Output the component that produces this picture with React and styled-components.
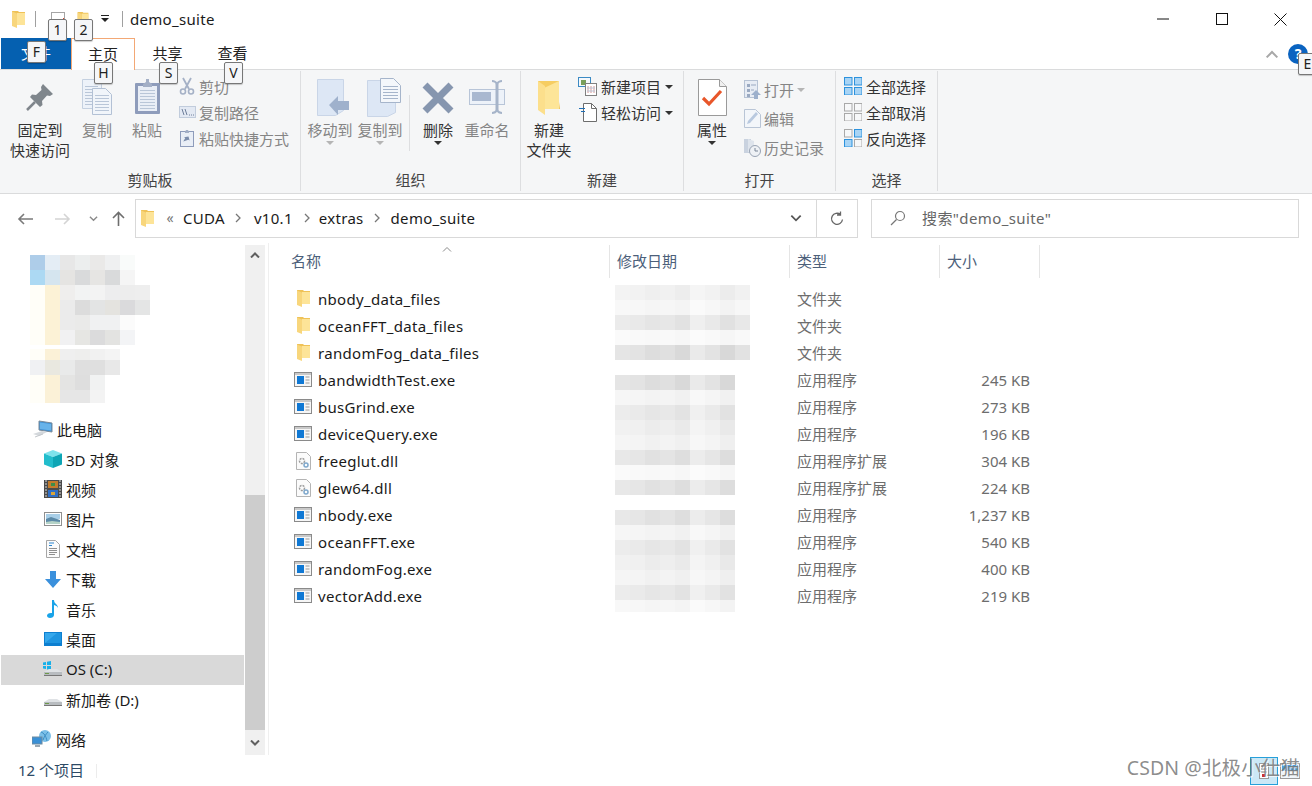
import styled, { createGlobalStyle } from 'styled-components'

const GlobalStyle = createGlobalStyle`
  html, body { margin: 0; padding: 0; background: #fff; }
  body { font-family: "Noto Sans", "Noto Sans CJK SC", sans-serif; font-size: 15px; color: #1a1a1a; }
`

const Window = styled.div`
  position: relative;
  width: 1312px;
  height: 786px;
  overflow: hidden;
  background: #fff;
  display: flex;
  flex-direction: column;
`

const Svg = styled.svg`
  display: block;
  flex-shrink: 0;
`

/* ---------- icons ---------- */

const SmallFolder = ({ w = 13, h = 17 }) => (
  <Svg width={w} height={h} viewBox="0 0 13 17">
    <path d="M0 0h6l1 1h6v13H0z" fill="#efc258" />
    <path d="M5 2h8v12H5z" fill="#fde498" />
    <path d="M0 .5l5 2V17l-5-2z" fill="#f8d67c" />
  </Svg>
)

const BigFolder = () => (
  <Svg width="24" height="36" viewBox="0 0 24 36">
    <path d="M1 1h21v28H1z" fill="#f6cd62" />
    <path d="M7 8l15-7v28H7z" fill="#fde598" />
    <path d="M1 1l7 5v29l-7-5z" fill="#fcdf8c" />
    <path d="M8 29h15v-7l-1 7z" fill="#f1c452" />
  </Svg>
)

const DocLines = ({ x, y, w, n, gap = 3, c = '#b9c6d8' }) => (
  <>
    {Array.from({ length: n }).map((_, i) => (
      <path key={i} d={`M${x} ${y + i * gap + 0.5}h${w}`} stroke={c} />
    ))}
  </>
)

const PinIcon = () => (
  <Svg width="28" height="28" viewBox="0 0 28 28">
    <path d="M17 1l10 10-3 2-3-.5-5 5.500 .5 4-2.500 2L4 14l2-2.500 4 .5 5.500-5L15 4z" fill="#7f868c" />
    <path d="M9 19L1 27" stroke="#7f868c" strokeWidth="2.500" />
  </Svg>
)

const CopyIcon = () => (
  <Svg width="30" height="36" viewBox="0 0 30 36">
    <path d="M.5.500h14l5 5v24H.5z" fill="#edf2f9" stroke="#c4d0e0" />
    <DocLines x={3} y={7} w={13} n={7} />
    <path d="M10.500 9.500h13l6 6v20h-19z" fill="#f1f5fa" stroke="#b3c1d5" />
    <DocLines x={13} y={16} w={14} n={6} />
  </Svg>
)

const PasteIcon = () => (
  <Svg width="27" height="37" viewBox="0 0 27 37">
    <rect x="1" y="5" width="25" height="31" rx="1" fill="#8e9cbb" />
    <rect x="4" y="8" width="19" height="25" fill="#e9eef6" />
    <DocLines x={6} y={12} w={15} n={7} />
    <path d="M9 6l3-2V1h3v3l3 2v3H9z" fill="#a3afc6" />
  </Svg>
)

const ScissorsIcon = () => (
  <Svg width="16" height="18" viewBox="0 0 16 18" fill="none" stroke="#a5b1c6">
    <path d="M4 1l6 11M12 1L6 12" strokeWidth="1.800" />
    <circle cx="4" cy="14.500" r="2.500" strokeWidth="1.600" />
    <circle cx="12" cy="14.500" r="2.500" strokeWidth="1.600" />
  </Svg>
)

const PathIcon = () => (
  <Svg width="17" height="12" viewBox="0 0 17 12">
    <rect x=".5" y=".5" width="16" height="11" fill="#e3e9f3" stroke="#c1ccdc" />
    <path d="M3 3l2 6M6 3l2 6" stroke="#6f7f9b" />
    <path d="M10 9h1M12 9h1M14 9h1" stroke="#6f7f9b" />
  </Svg>
)

const ShortcutIcon = () => (
  <Svg width="14" height="18" viewBox="0 0 14 18">
    <rect x=".5" y="2.500" width="13" height="15" fill="#e9eef6" stroke="#8e9cbb" />
    <path d="M5 3l1-2h2l1 2v1H5z" fill="#a3afc6" />
    <path d="M5 14V10h-1.500L7 7l3 3H8.500" fill="#7a8cab" transform="rotate(30 7 10)" />
  </Svg>
)

const MoveToIcon = () => (
  <Svg width="33" height="37" viewBox="0 0 33 37">
    <path d="M.5.500h26v31l-8 5H.5z" fill="#dde7f5" stroke="#c9d5e7" />
    <path d="M12 26l9-9v5h11v9H21v5z" fill="#9fb1cc" />
  </Svg>
)

const CopyToIcon = () => (
  <Svg width="34" height="39" viewBox="0 0 34 39">
    <path d="M.5 2.500h28v32l-8 4H.5z" fill="#dde7f5" stroke="#c9d5e7" />
    <path d="M13.500.500h13l7 7v17h-20z" fill="#f4f7fb" stroke="#a6b5cb" />
    <DocLines x={16} y={8} w={15} n={5} c="#a6b5cb" />
  </Svg>
)

const DeleteIcon = () => (
  <Svg width="32" height="32" viewBox="0 0 32 32">
    <path d="M3 3l26 26M29 3L3 29" stroke="#8696af" strokeWidth="7" />
  </Svg>
)

const RenameIcon = () => (
  <Svg width="36" height="34" viewBox="0 0 36 34">
    <rect x=".5" y="9.500" width="35" height="15" fill="#edf2f9" stroke="#b8c5d8" />
    <rect x="3" y="12" width="19" height="9" fill="#a9b8d0" />
    <path d="M28 4v26" stroke="#a6b4c9" strokeWidth="3" />
    <path d="M23 1c2 0 4 1 5 3 1-2 3-3 5-3M23 33c2 0 4-1 5-3 1 2 3 3 5 3" stroke="#a6b4c9" strokeWidth="2" fill="none" />
  </Svg>
)

const NewItemIcon = () => (
  <Svg width="19" height="19" viewBox="0 0 19 19">
    <rect x=".5" y=".5" width="12" height="9" fill="#f5f8fb" stroke="#3b8ac4" />
    <rect x="3" y="3" width="5" height="5" fill="#7ba05b" />
    <rect x="7.500" y="6.500" width="11" height="12" fill="#fff" stroke="#808080" />
    <path d="M10 9v7M13 9v7M16 9v7" stroke="#d99694" />
    <path d="M9 11h8M9 14h8" stroke="#b8c6d8" />
  </Svg>
)

const EasyAccessIcon = () => (
  <Svg width="18" height="19" viewBox="0 0 18 19">
    <path d="M4.500.500h8l5 5v13h-13z" fill="#fff" stroke="#6d6d6d" />
    <path d="M12.500.500v5h5" fill="none" stroke="#6d6d6d" />
    <path d="M0 5.500h6M2 8.500h4" stroke="#1f6fb5" strokeWidth="1.200" />
  </Svg>
)

const PropertiesIcon = () => (
  <Svg width="29" height="37" viewBox="0 0 29 37">
    <path d="M.5.500h21l7 7v29H.5z" fill="#fff" stroke="#9a9a9a" />
    <path d="M21.500.500v7h7" fill="#f0f0f0" stroke="#9a9a9a" />
    <path d="M5 19l6 6 12-13" fill="none" stroke="#e8562a" strokeWidth="3.200" />
  </Svg>
)

const OpenSmallIcon = () => (
  <Svg width="17" height="19" viewBox="0 0 17 19">
    <rect x=".5" y=".5" width="13" height="17" fill="#e7ecf4" stroke="#b6c2d4" />
    <path d="M3 4h3v3H3zM3 9h3v3H3zM3 14h3v3H3z" fill="#9aa9c1" />
    <path d="M7 5h5M7 10h3" stroke="#9aa9c1" />
    <path d="M7 15l5-5 5 5h-3v4h-4v-4z" fill="#9db0cc" />
  </Svg>
)

const EditIcon = () => (
  <Svg width="17" height="19" viewBox="0 0 17 19">
    <path d="M.5.500h11l5 5v13H.5z" fill="#f3f6fa" stroke="#b9c5d6" />
    <path d="M3 15l1-3 8-9 2 2-8 9z" fill="#b9c9df" />
  </Svg>
)

const HistoryIcon = () => (
  <Svg width="17" height="19" viewBox="0 0 17 19">
    <path d="M0 1h7v14H0z" fill="#c9d2df" />
    <path d="M4 1l6 2v11H4z" fill="#dee4ec" />
    <circle cx="11" cy="13" r="5.500" fill="#eef1f5" stroke="#98a3b3" />
    <path d="M11 10v3h3" fill="none" stroke="#7b8798" />
  </Svg>
)

const GridIcon = ({ on }) => (
  <Svg width="18" height="18" viewBox="0 0 18 18">
    {[[0, 0], [10, 0], [0, 10], [10, 10]].map(([x, y], i) => (
      <rect
        key={i}
        x={x + 0.5}
        y={y + 0.5}
        width="7.500"
        height="7.500"
        fill={on[i] ? '#a8d4f5' : '#f7f8f9'}
        stroke={on[i] ? '#2c92dd' : '#a9a9a9'}
      />
    ))}
  </Svg>
)

const ExeIcon = () => (
  <Svg width="18" height="15" viewBox="0 0 18 15">
    <rect x=".5" y=".5" width="17" height="14" fill="#f6f6f6" stroke="#8a8a8a" />
    <path d="M1 1h16v2H1z" fill="#c9c9c9" />
    <rect x="3" y="4" width="7" height="8" fill="#0f78d4" />
    <path d="M11.500 5h4M11.500 8h4M11.500 11h4" stroke="#9a9a9a" />
  </Svg>
)

const DllIcon = () => (
  <Svg width="15" height="18" viewBox="0 0 15 18">
    <path d="M.5.500h10l4 4v13H.5z" fill="#fbfbfb" stroke="#b4b4b4" />
    <circle cx="6" cy="9" r="2.500" fill="none" stroke="#9c9c9c" strokeWidth="1.500" strokeDasharray="2 1" />
    <circle cx="10" cy="13" r="2" fill="none" stroke="#7fa8cc" strokeWidth="1.500" />
  </Svg>
)

const ComputerIcon = () => (
  <Svg width="20" height="18" viewBox="0 0 20 18">
    <path d="M6 1l13 2v9L6 10z" fill="#3d8fd4" stroke="#7b8b99" />
    <path d="M7 2.500l11 1.500v6.500L7 9z" fill="#67b3ea" />
    <path d="M0 14l9-3 5 1-8 4z" fill="#d4d8dc" />
    <path d="M2 17l8-3" stroke="#c3c7cb" />
  </Svg>
)

const CubeIcon = () => (
  <Svg width="18" height="18" viewBox="0 0 18 18">
    <path d="M9 0l9 3.500L9 7 0 3.500z" fill="#7ee3ec" />
    <path d="M0 3.500L9 7v11l-9-3.500z" fill="#22bdcc" />
    <path d="M18 3.500L9 7v11l9-3.500z" fill="#0ea5b5" />
  </Svg>
)

const FilmIcon = () => (
  <Svg width="18" height="18" viewBox="0 0 18 18">
    <rect width="18" height="18" fill="#4a4a4a" />
    {[1, 4, 7, 10, 13, 16].map(y => (
      <path key={y} d={`M1 ${y}h2M15 ${y}h2`} stroke="#d9d9d9" />
    ))}
    <rect x="4" y="1" width="10" height="7" fill="#c27b2c" />
    <rect x="4" y="10" width="10" height="7" fill="#2f6fc6" />
    <rect x="7" y="3" width="4" height="3" fill="#3c8d4a" />
    <rect x="7" y="12" width="4" height="3" fill="#d9a53a" />
  </Svg>
)

const PictureIcon = () => (
  <Svg width="18" height="14" viewBox="0 0 18 14">
    <rect x=".5" y=".5" width="17" height="13" fill="#fff" stroke="#8f8f8f" />
    <path d="M2 2h14v5H2z" fill="#a9cfe8" />
    <path d="M2 7l5-2 9 3v4H2z" fill="#5c8aa8" />
    <path d="M2 10l6-1 8 1v2H2z" fill="#b6d4c8" />
  </Svg>
)

const DocumentIcon = () => (
  <Svg width="14" height="18" viewBox="0 0 14 18">
    <path d="M.5.500h9l4 4v13H.5z" fill="#fbfbfb" stroke="#a6a6a6" />
    <path d="M3 3h5M3 5.500h3" stroke="#2a86d1" strokeWidth="1.200" />
    <path d="M3 8.500h8M3 10.500h8M3 12.500h8M3 14.500h6" stroke="#8f8f8f" />
  </Svg>
)

const DownloadIcon = () => (
  <Svg width="16" height="17" viewBox="0 0 16 17">
    <path d="M5 0h6v8h5l-8 9-8-9h5z" fill="#3a90dc" />
  </Svg>
)

const MusicIcon = () => (
  <Svg width="12" height="18" viewBox="0 0 12 18">
    <path d="M5 0h2c0 4 4 4 4 8-1-2-2-2.500-4-3v10c0 2-2 3-4 3s-3-1-3-2.500S2 12.500 5 13z" fill="#19a3e8" />
  </Svg>
)

const DesktopIcon = () => (
  <Svg width="18" height="14" viewBox="0 0 18 14">
    <rect width="18" height="14" fill="#0d7fd0" />
    <path d="M1 1h16v10H1z" fill="#35a8ec" />
    <path d="M1 11l12-10h4v10z" fill="#1f95e0" />
  </Svg>
)

const DriveIcon = ({ win }) => (
  <Svg width="20" height="16" viewBox="0 0 20 16">
    {win && <path d="M0 1.500l3-.5v3H0zM4 .8L8 0v4H4zM0 5h3v3l-3-.5zM4 5h4v4l-4-.6z" fill="#17b0ea" />}
    <path d="M1 11l5-3h8l5 3v3H1z" fill="#dfe2e5" />
    <path d="M1 11h18v3.500H1z" fill="#b8bcc0" />
    <path d="M2 12h4v1H2z" fill="#6d9a4a" />
    <path d="M1 14.500h18" stroke="#777" />
  </Svg>
)

const NetworkIcon = () => (
  <Svg width="20" height="18" viewBox="0 0 20 18">
    <circle cx="13" cy="6" r="6" fill="#7cc0e8" />
    <path d="M9 2c3 1 5 4 6 9M16 2c-2 2-4 5-5 8" stroke="#3c8ec4" fill="none" />
    <rect x="0" y="7" width="10" height="7" fill="#3a90d6" stroke="#6f8ba0" />
    <path d="M3 16h5" stroke="#9ba8b2" strokeWidth="2" />
  </Svg>
)

const Chevron = ({ up, w = 10, h = 6, c = '#7a7a7a', sw = 1.500 }) => (
  <Svg width={w} height={h} viewBox="0 0 10 6">
    <path d={up ? 'M1 5.500l4-4 4 4' : 'M1 .5l4 4 4-4'} fill="none" stroke={c} strokeWidth={sw} />
  </Svg>
)

const BackArrow = () => (
  <Svg width="16" height="12" viewBox="0 0 16 12">
    <path d="M16 6H2M7 1L2 6l5 5" fill="none" stroke="#7a7a7a" strokeWidth="1.600" />
  </Svg>
)

const ForwardArrow = () => (
  <Svg width="16" height="12" viewBox="0 0 16 12">
    <path d="M0 6h14M9 1l5 5-5 5" fill="none" stroke="#d4d4d4" strokeWidth="1.600" />
  </Svg>
)

const CrumbArrow = () => (
  <Svg width="6" height="10" viewBox="0 0 6 10">
    <path d="M1 1l4 4-4 4" fill="none" stroke="#777" strokeWidth="1.300" />
  </Svg>
)

/* ---------- title bar ---------- */

const TitleBar = styled.div`
  display: flex;
  align-items: center;
  height: 38px;
  padding-left: 12px;
  flex-shrink: 0;
`

const TitleSep = styled.div`
  width: 1px;
  height: 16px;
  background: #a0a0a0;
  margin: 0 ${p => p.$right ?? 15}px 0 ${p => p.$left ?? 10}px;
`

const TitleText = styled.div`
  font-size: 15px;
  color: #1a1a1a;
  letter-spacing: 0.3px;
`

const QuickDoc = styled.div`
  width: 14px;
  height: 14px;
  margin-right: 12px;
  border: 1px solid #a5a5a5;
  background: linear-gradient(135deg, #fff 70%, #d9452a 70%);
  box-sizing: border-box;
`

const QuickDrop = styled.div`
  margin: 0 0 0 12px;
  width: 8px;
  height: 7px;
  border-top: 1px solid #222;
  position: relative;
  &:after {
    content: '';
    position: absolute;
    left: 0;
    top: 2px;
    border: 4px solid transparent;
    border-top-color: #222;
    border-bottom: 0;
  }
`

const WindowButtons = styled.div`
  margin-left: auto;
  margin-right: 2px;
  display: flex;
`

const WindowButton = styled.div`
  width: 59px;
  height: 38px;
  display: flex;
  align-items: center;
  justify-content: center;
`

/* ---------- tabs ---------- */

const TabBar = styled.div`
  display: flex;
  align-items: stretch;
  height: 32px;
  padding-left: 1px;
  border-bottom: 1px solid #dadbdc;
  box-sizing: border-box;
  flex-shrink: 0;
`

const Tab = styled.div`
  width: ${p => p.$w || 65}px;
  display: flex;
  align-items: center;
  justify-content: center;
  padding-bottom: 2px;
  font-size: 15px;
  box-sizing: border-box;
  color: ${p => (p.$file ? '#fff' : '#222')};
  background: ${p => (p.$file ? '#0560b0' : '#fff')};
  border: ${p => (p.$active ? '1px solid #f3a875' : 'none')};
  border-bottom: none;
  height: ${p => (p.$active ? '32px' : 'auto')};
`

const TabRight = styled.div`
  margin-left: auto;
  display: flex;
  align-items: center;
  gap: 9px;
  padding-right: 4px;
`

const HelpBall = styled.div`
  width: 20px;
  height: 20px;
  border-radius: 50%;
  background: #0a63c0;
  color: #fff;
  font-weight: 700;
  font-size: 14px;
  line-height: 20px;
  text-align: center;
`

const KeyTip = styled.div`
  position: absolute;
  left: ${p => p.$x}px;
  top: ${p => p.$y}px;
  width: 19px;
  height: 22px;
  box-sizing: border-box;
  border: 1px solid #777;
  border-radius: 2px;
  background: #f5f6f8;
  box-shadow: 0 1px 1px rgba(0, 0, 0, 0.2);
  color: #222;
  font-size: 14px;
  line-height: 20px;
  text-align: center;
`

/* ---------- ribbon ---------- */

const Ribbon = styled.div`
  display: flex;
  height: 124px;
  background: #f5f6f7;
  border-bottom: 1px solid #dadbdc;
  box-sizing: border-box;
  flex-shrink: 0;
`

const Group = styled.div`
  width: ${p => p.$w}px;
  height: 120px;
  margin-top: 1px;
  box-sizing: border-box;
  border-right: 1px solid #dddee0;
  display: flex;
  flex-direction: column;
`

const GroupBody = styled.div`
  flex: 1;
  display: flex;
  align-items: flex-start;
  padding-left: ${p => p.$pl || 0}px;
`

const GroupLabel = styled.div`
  height: 20px;
  margin-bottom: 1px;
  line-height: 20px;
  text-align: center;
  font-size: 15px;
  color: #444;
`

const BigButton = styled.div`
  width: ${p => p.$w}px;
  padding-top: 7px;
  display: flex;
  flex-direction: column;
  align-items: center;
  flex-shrink: 0;
  color: ${p => (p.$off ? '#858585' : '#333')};
  font-size: 15px;
  line-height: 20px;
`

const BigIcon = styled.div`
  height: 42px;
  box-sizing: border-box;
  padding-top: ${p => p.$pt || 0}px;
  margin-left: ${p => p.$ml || 0}px;
  display: flex;
  align-items: flex-start;
  justify-content: center;
`

const Caret = styled.div`
  width: 0;
  height: 0;
  margin-top: 1px;
  border: 4px solid transparent;
  border-top-color: ${p => (p.$off ? '#b5b5b5' : '#333')};
  border-bottom: 0;
`

const SmallList = styled.div`
  display: flex;
  flex-direction: column;
  padding-top: ${p => p.$pt || 3}px;
  margin-left: ${p => p.$ml || 0}px;
`

const SmallItem = styled.div`
  height: ${p => p.$h || 26}px;
  display: flex;
  align-items: center;
  gap: ${p => p.$gap || 4}px;
  font-size: 15px;
  color: ${p => (p.$off ? '#858585' : '#333')};
  white-space: nowrap;
`

const SmallIconBox = styled.div`
  width: ${p => p.$w || 18}px;
  display: flex;
  justify-content: center;
`

const VDivider = styled.div`
  width: 1px;
  height: 56px;
  margin: 24px 5px 0 4px;
  background: #dddee0;
`

/* ---------- address row ---------- */

const AddressRow = styled.div`
  height: 49px;
  display: flex;
  align-items: flex-start;
  padding: 5px 0 0 17px;
  box-sizing: border-box;
  flex-shrink: 0;
`

const NavButtons = styled.div`
  display: flex;
  align-items: center;
  width: 118px;
  height: 39px;
`

const NavGap = styled.div`
  width: ${p => p.$w}px;
`

const AddressBox = styled.div`
  width: 723px;
  height: 39px;
  box-sizing: border-box;
  border: 1px solid #d9d9d9;
  display: flex;
  align-items: center;
  padding-left: 5px;
`

const Crumb = styled.span`
  font-size: 15px;
  padding-bottom: 2px;
  color: #1a1a1a;
  letter-spacing: 0.3px;
`

const CrumbSep = styled.div`
  width: 14px;
  margin: 0 ${p => p.$mr || 0}px 0 ${p => p.$ml || 0}px;
  display: flex;
  justify-content: center;
  flex-shrink: 0;
  color: #777;
  font-size: 14px;
  padding-bottom: 2px;
`

const AddressEnd = styled.div`
  margin-left: auto;
  display: flex;
  align-items: center;
  height: 100%;
`

const DropBox = styled.div`
  width: 41px;
  height: 100%;
  display: flex;
  align-items: center;
  justify-content: center;
  border-right: 1px solid #d9d9d9;
`

const RefreshBox = styled.div`
  width: 40px;
  display: flex;
  justify-content: center;
`

const SearchBox = styled.div`
  width: 428px;
  height: 39px;
  margin-left: 13px;
  box-sizing: border-box;
  border: 1px solid #d9d9d9;
  display: flex;
  align-items: center;
  gap: 16px;
  padding: 0 0 2px 18px;
  color: #666;
  font-size: 15px;
  letter-spacing: 0.4px;
`

/* ---------- main ---------- */

const Main = styled.div`
  height: 512px;
  display: flex;
  flex-shrink: 0;
`

const NavPane = styled.div`
  width: 245px;
  padding-top: 12px;
  box-sizing: border-box;
  flex-shrink: 0;
`

const MosaicRow = styled.div`
  display: flex;
  margin-left: ${p => p.$ml || 0}px;
`

const MosaicCell = styled.div.attrs(p => ({ style: { background: p.$c } }))`
  width: 15px;
  height: ${p => p.$h || 15}px;
  flex-shrink: 0;
`

const NavMosaic = styled.div`
  height: 160px;
`

const MosaicGap = styled.div`
  height: ${p => p.$h}px;
`

const TreeRow = styled.div`
  height: 30px;
  box-sizing: border-box;
  display: flex;
  align-items: center;
  margin: 0 1px;
  background: ${p => (p.$selected ? '#d9d9d9' : 'transparent')};
  padding: 0 0 2px ${p => p.$indent}px;
  font-size: 15px;
  color: #1a1a1a;
  white-space: nowrap;
`

const TreeIcon = styled.div`
  width: ${p => p.$w || 24}px;
  display: flex;
  justify-content: center;
  margin-right: ${p => p.$mr ?? 0}px;
  flex-shrink: 0;
`

const ScrollBar = styled.div`
  width: 20px;
  height: 510px;
  margin-top: 2px;
  margin-right: 3px;
  background: #f0f0f0;
  display: flex;
  flex-direction: column;
  flex-shrink: 0;
`

const ScrollEnd = styled.div`
  height: ${p => p.$h}px;
  display: flex;
  align-items: center;
  justify-content: center;
`

const ScrollThumb = styled.div`
  height: 235px;
  background: #cdcdcd;
  margin-top: auto;
`

const FilePane = styled.div`
  position: relative;
  flex: 1;
  min-width: 0;
  border-left: 1px solid #efefef;
`

const HeaderRow = styled.div`
  position: relative;
  display: grid;
  grid-template-columns: 342px 180px 150px 100px;
  height: 33px;
  margin-top: 2px;
  margin-left: -1px;
`

const HeaderCell = styled.div`
  display: flex;
  align-items: center;
  padding: 0 0 2px ${p => p.$pl || 7}px;
  border-right: 1px solid #e5e5e5;
  font-size: 15px;
  color: #4c607a;
`

const SortMark = styled.div`
  position: absolute;
  left: 174px;
  top: 1px;
`

const FileList = styled.div`
  margin-top: 8px;
  margin-left: -1px;
`

const FileRow = styled.div`
  display: grid;
  grid-template-columns: 342px 180px 150px 90px;
  height: 27px;
  box-sizing: border-box;
  padding-bottom: 2px;
  align-items: center;
  font-size: 15px;
`

const NameCell = styled.div`
  display: flex;
  align-items: center;
  padding-left: 26px;
  color: #1a1a1a;
  letter-spacing: 0.3px;
`

const NameIcon = styled.div`
  width: 18px;
  margin-right: 6px;
  display: flex;
  justify-content: center;
  flex-shrink: 0;
`

const TypeCell = styled.div`
  grid-column: 3;
  padding-left: 7px;
  color: #6d6d6d;
  font-size: 15px;
`

const SizeCell = styled.div`
  text-align: right;
  color: #6d6d6d;
  font-size: 15px;
`

const DateMosaic = styled.div`
  position: absolute;
  left: 346px;
  top: 42px;
`

/* ---------- status bar ---------- */

const StatusBar = styled.div`
  flex: 1;
  display: flex;
  align-items: center;
  padding-left: 18px;
  font-size: 15px;
  color: #2d4a66;
`

const StatusText = styled.span`
  padding-bottom: 2px;
`

const StatusSep = styled.div`
  width: 1px;
  height: 14px;
  background: #ececec;
  margin-left: 12px;
`

const ViewButtons = styled.div`
  margin-left: auto;
  margin-right: 12px;
  display: flex;
  align-items: center;
  gap: 2px;
`

const ViewButton = styled.div`
  width: ${p => p.$w || 28}px;
  height: 28px;
  box-sizing: border-box;
  border: 1px solid ${p => (p.$on ? '#26a0da' : 'transparent')};
  background: ${p => (p.$on ? '#cbe8f6' : 'transparent')};
  display: flex;
  align-items: center;
  justify-content: center;
`

const Watermark = styled.div`
  position: absolute;
  right: 12px;
  bottom: 5px;
  font-size: 19.5px;
  letter-spacing: 0.1px;
  color: rgba(120, 120, 120, 0.85);
  text-shadow: 1px 1px 0 rgba(255, 255, 255, 0.7);
  white-space: nowrap;
`

/* ---------- data ---------- */

const navMosaic = [
  ['#aecde9', '#e4edf5', '#e7e7e7', '#eceeee', '#eae9e8', '#eff0f1', '#f9fbfa'],
  ['#acd9f3', '#d5e5ef', '#e5e4e2', '#d9dadb', '#e6e5e3', '#d9dadb', '#f5f5f5'],
  ['#fffef8', '#fcf2d6', '#efeeed', '#f2f3f3', '#f3f3f3', '#ededee', '#ededed', '#eeeeee'],
  ['#fffef8', '#fcf2d6', '#ebebeb', '#dcdcdc', '#e3e4e4', '#e4e3df', '#dadadc', '#e4e5e5'],
  ['#fffef8', '#fcf2d6', '#ebebeb', '#eaeae9', '#f0f1f2', '#f0f1f2', '#fbfbfb'],
  ['#fffef8', '#fcf2d6', '#f1f1f2', '#e6e6e3', '#dbdbdc', '#e3e3e1', '#f3f4f6'],
]

const navMosaic2 = [
  { h: 11, cells: ['#fffef8', '#fbf1d7', '#efefef', '#eeeeed', '#f1f1f1', '#f4f4f4'] },
  { h: 15, cells: ['#f0f1f3', '#e9e8e0', '#e9eaea', '#dfdfdf', '#dfdfdf', '#e8e8e8'] },
  { h: 15, cells: ['#fffef8', '#fbf1d7', '#e4e4e3', '#dedede', '#f1f2f2'] },
  { h: 13, cells: ['#fffef8', '#fbf1d7', '#e6e6e6', '#e6e6e6', '#f3f3f3'] },
]

const shade = [0, -2, -7, -4, -10, 4, -2, -11, -3]

const dateRows = [
  { base: 243, n: 9 }, { base: 248, n: 9 }, { base: 235, n: 9 }, { base: 250, n: 9 }, { base: 229, n: 9 },
  { gap: 15 },
  { base: 229, n: 8 }, { base: 246, n: 8 }, { base: 236, n: 8 }, { base: 241, n: 8 }, { base: 245, n: 8 },
  { base: 232, n: 8 }, { base: 250, n: 8 }, { base: 232, n: 8 },
  { gap: 15 },
  { base: 232, n: 8 }, { base: 246, n: 8 }, { base: 236, n: 8 }, { base: 241, n: 8 }, { base: 245, n: 8 },
  { base: 236, n: 8 }, { base: 248, n: 8, h: 12 },
]

const grey = v => {
  const c = Math.min(255, v)
  return `rgb(${c},${c},${c})`
}

const files = [
  { name: 'nbody_data_files', kind: 'folder', type: '文件夹' },
  { name: 'oceanFFT_data_files', kind: 'folder', type: '文件夹' },
  { name: 'randomFog_data_files', kind: 'folder', type: '文件夹' },
  { name: 'bandwidthTest.exe', kind: 'exe', type: '应用程序', size: '245 KB' },
  { name: 'busGrind.exe', kind: 'exe', type: '应用程序', size: '273 KB' },
  { name: 'deviceQuery.exe', kind: 'exe', type: '应用程序', size: '196 KB' },
  { name: 'freeglut.dll', kind: 'dll', type: '应用程序扩展', size: '304 KB' },
  { name: 'glew64.dll', kind: 'dll', type: '应用程序扩展', size: '224 KB' },
  { name: 'nbody.exe', kind: 'exe', type: '应用程序', size: '1,237 KB' },
  { name: 'oceanFFT.exe', kind: 'exe', type: '应用程序', size: '540 KB' },
  { name: 'randomFog.exe', kind: 'exe', type: '应用程序', size: '400 KB' },
  { name: 'vectorAdd.exe', kind: 'exe', type: '应用程序', size: '219 KB' },
]

const fileIcons = {
  folder: <SmallFolder />,
  exe: <ExeIcon />,
  dll: <DllIcon />,
}

const tree = [
  { label: '3D 对象', icon: <CubeIcon /> },
  { label: '视频', icon: <FilmIcon /> },
  { label: '图片', icon: <PictureIcon /> },
  { label: '文档', icon: <DocumentIcon /> },
  { label: '下载', icon: <DownloadIcon /> },
  { label: '音乐', icon: <MusicIcon /> },
  { label: '桌面', icon: <DesktopIcon /> },
  { label: 'OS (C:)', icon: <DriveIcon win />, selected: true },
  { label: '新加卷 (D:)', icon: <DriveIcon /> },
]

const keyTips = [
  ['F', 27, 41], ['1', 48, 19], ['2', 74, 19], ['H', 94, 62], ['S', 159, 62], ['V', 224, 62],
]

/* ---------- page ---------- */

const App = () => (
  <Window>
    <GlobalStyle />

    <TitleBar>
      <SmallFolder />
      <TitleSep />
      <QuickDoc />
      <SmallFolder w={12} h={14} />
      <QuickDrop />
      <TitleSep $left={13} $right={7} />
      <TitleText>demo_suite</TitleText>
      <WindowButtons>
        <WindowButton>
          <Svg width="12" height="12" viewBox="0 0 12 12"><path d="M0 6h12" stroke="#111" /></Svg>
        </WindowButton>
        <WindowButton>
          <Svg width="12" height="12" viewBox="0 0 12 12"><rect x=".5" y=".5" width="11" height="11" fill="none" stroke="#111" /></Svg>
        </WindowButton>
        <WindowButton>
          <Svg width="13" height="13" viewBox="0 0 13 13"><path d="M.5.500l12 12M12.500.500l-12 12" stroke="#111" /></Svg>
        </WindowButton>
      </WindowButtons>
    </TitleBar>

    <TabBar>
      <Tab $file $w={70}>文件</Tab>
      <Tab $active $w={64}>主页</Tab>
      <Tab>共享</Tab>
      <Tab>查看</Tab>
      <TabRight>
        <Chevron up w={14} h={8} c="#a8a8a8" />
        <HelpBall>?</HelpBall>
      </TabRight>
    </TabBar>

    <Ribbon>
      <Group $w={301}>
        <GroupBody $pl={5}>
          <BigButton $w={70}>
            <BigIcon $pt={5}><PinIcon /></BigIcon>
            <span>固定到</span>
            <span>快速访问</span>
          </BigButton>
          <BigButton $w={44} $off>
            <BigIcon $pt={1}><CopyIcon /></BigIcon>
            <span>复制</span>
          </BigButton>
          <BigButton $w={56} $off>
            <BigIcon><PasteIcon /></BigIcon>
            <span>粘贴</span>
          </BigButton>
          <SmallList $ml={3} $pt={2}>
            <SmallItem $off $gap={3}><SmallIconBox><ScissorsIcon /></SmallIconBox>剪切</SmallItem>
            <SmallItem $off $gap={3}><SmallIconBox><PathIcon /></SmallIconBox>复制路径</SmallItem>
            <SmallItem $off $gap={3}><SmallIconBox><ShortcutIcon /></SmallIconBox>粘贴快捷方式</SmallItem>
          </SmallList>
        </GroupBody>
        <GroupLabel>剪贴板</GroupLabel>
      </Group>

      <Group $w={220}>
        <GroupBody $pl={4}>
          <BigButton $w={50} $off>
            <BigIcon $pt={1} $ml={6}><MoveToIcon /></BigIcon>
            <span>移动到</span>
            <Caret $off />
          </BigButton>
          <BigButton $w={50} $off>
            <BigIcon $ml={8}><CopyToIcon /></BigIcon>
            <span>复制到</span>
            <Caret $off />
          </BigButton>
          <VDivider />
          <BigButton $w={46}>
            <BigIcon $pt={4}><DeleteIcon /></BigIcon>
            <span>删除</span>
            <Caret />
          </BigButton>
          <BigButton $w={52} $off>
            <BigIcon $pt={2}><RenameIcon /></BigIcon>
            <span>重命名</span>
          </BigButton>
        </GroupBody>
        <GroupLabel>组织</GroupLabel>
      </Group>

      <Group $w={163}>
        <GroupBody $pl={3}>
          <BigButton $w={50}>
            <BigIcon $pt={2}><BigFolder /></BigIcon>
            <span>新建</span>
            <span>文件夹</span>
          </BigButton>
          <SmallList $ml={4} $pt={2}>
            <SmallItem>
              <SmallIconBox $w={19}><NewItemIcon /></SmallIconBox>新建项目<Caret />
            </SmallItem>
            <SmallItem>
              <SmallIconBox $w={19}><EasyAccessIcon /></SmallIconBox>轻松访问<Caret />
            </SmallItem>
          </SmallList>
        </GroupBody>
        <GroupLabel>新建</GroupLabel>
      </Group>

      <Group $w={152}>
        <GroupBody $pl={5}>
          <BigButton $w={46}>
            <BigIcon $pt={1}><PropertiesIcon /></BigIcon>
            <span>属性</span>
            <Caret />
          </BigButton>
          <SmallList $ml={9} $pt={4}>
            <SmallItem $off $h={29} $gap={3}>
              <SmallIconBox $w={17}><OpenSmallIcon /></SmallIconBox>打开<Caret $off />
            </SmallItem>
            <SmallItem $off $h={29} $gap={3}><SmallIconBox $w={17}><EditIcon /></SmallIconBox>编辑</SmallItem>
            <SmallItem $off $h={29} $gap={3}><SmallIconBox $w={17}><HistoryIcon /></SmallIconBox>历史记录</SmallItem>
          </SmallList>
        </GroupBody>
        <GroupLabel>打开</GroupLabel>
      </Group>

      <Group $w={102}>
        <GroupBody $pl={8}>
          <SmallList $pt={2}>
            <SmallItem><GridIcon on={[1, 1, 1, 1]} />全部选择</SmallItem>
            <SmallItem><GridIcon on={[0, 0, 0, 0]} />全部取消</SmallItem>
            <SmallItem><GridIcon on={[0, 1, 1, 0]} />反向选择</SmallItem>
          </SmallList>
        </GroupBody>
        <GroupLabel>选择</GroupLabel>
      </Group>
    </Ribbon>

    <AddressRow>
      <NavButtons>
        <BackArrow />
        <NavGap $w={22} />
        <ForwardArrow />
        <NavGap $w={18} />
        <Chevron c="#8a8a8a" w={9} h={6} />
        <NavGap $w={14} />
        <Svg width="13" height="15" viewBox="0 0 13 15">
          <path d="M6.500 15V2M1 7l5.500-5.500L12 7" fill="none" stroke="#6e6e6e" strokeWidth="1.600" />
        </Svg>
      </NavButtons>
      <AddressBox>
        <SmallFolder />
        <CrumbSep $ml={9} $mr={6}>«</CrumbSep>
        <Crumb>CUDA</Crumb>
        <CrumbSep $ml={6} $mr={9}><CrumbArrow /></CrumbSep>
        <Crumb>v10.1</Crumb>
        <CrumbSep $ml={7} $mr={5}><CrumbArrow /></CrumbSep>
        <Crumb>extras</Crumb>
        <CrumbSep $ml={6} $mr={7}><CrumbArrow /></CrumbSep>
        <Crumb>demo_suite</Crumb>
        <AddressEnd>
          <DropBox><Chevron w={12} h={7} c="#555" /></DropBox>
          <RefreshBox>
            <Svg width="14" height="15" viewBox="0 0 14 15">
              <path d="M12.500 8.500a5.500 5.500 0 1 1-2-5M10.500 .5v3.500H7" fill="none" stroke="#666" strokeWidth="1.300" />
            </Svg>
          </RefreshBox>
        </AddressEnd>
      </AddressBox>
      <SearchBox>
        <Svg width="16" height="16" viewBox="0 0 16 16">
          <circle cx="10" cy="6" r="4.500" fill="none" stroke="#777" strokeWidth="1.200" />
          <path d="M6.500 9.500L1 15" stroke="#777" strokeWidth="1.300" />
        </Svg>
        搜索"demo_suite"
      </SearchBox>
    </AddressRow>

    <Main>
      <NavPane>
        <NavMosaic>
          {navMosaic.map((row, i) => (
            <MosaicRow key={i} $ml={30}>
              {row.map((c, j) => <MosaicCell key={j} $c={c} />)}
            </MosaicRow>
          ))}
          <MosaicGap $h={4} />
          {navMosaic2.map((row, i) => (
            <MosaicRow key={i} $ml={30}>
              {row.cells.map((c, j) => <MosaicCell key={j} $c={c} $h={row.h} />)}
            </MosaicRow>
          ))}
        </NavMosaic>
        <TreeRow $indent={31}>
          <TreeIcon $w={22} $mr={3}><ComputerIcon /></TreeIcon>此电脑
        </TreeRow>
        {tree.map(t => (
          <TreeRow key={t.label} $indent={40} $selected={t.selected}>
            <TreeIcon $mr={1}>{t.icon}</TreeIcon>{t.label}
          </TreeRow>
        ))}
        <MosaicGap $h={10} />
        <TreeRow $indent={30}>
          <TreeIcon $w={22} $mr={3}><NetworkIcon /></TreeIcon>网络
        </TreeRow>
      </NavPane>

      <ScrollBar>
        <ScrollEnd $h={20}><Chevron up w={10} h={6} c="#606060" sw={2} /></ScrollEnd>
        <ScrollThumb />
        <ScrollEnd $h={25}><Chevron w={10} h={6} c="#606060" sw={2} /></ScrollEnd>
      </ScrollBar>

      <FilePane>
        <HeaderRow>
          <HeaderCell $pl={23}>名称</HeaderCell>
          <HeaderCell>修改日期</HeaderCell>
          <HeaderCell>类型</HeaderCell>
          <HeaderCell>大小</HeaderCell>
          <SortMark><Chevron up w={10} h={6} c="#8a8a8a" sw={1} /></SortMark>
        </HeaderRow>
        <FileList>
          {files.map(f => (
            <FileRow key={f.name}>
              <NameCell>
                <NameIcon>{fileIcons[f.kind]}</NameIcon>
                {f.name}
              </NameCell>
              <TypeCell>{f.type}</TypeCell>
              <SizeCell>{f.size}</SizeCell>
            </FileRow>
          ))}
        </FileList>
        <DateMosaic>
          {dateRows.map((row, i) =>
            row.gap ? (
              <MosaicGap key={i} $h={row.gap} />
            ) : (
              <MosaicRow key={i}>
                {Array.from({ length: row.n }).map((_, j) => (
                  <MosaicCell
                    key={j}
                    $h={row.h}
                    $c={grey(row.base + Math.round(shade[j] * (255 - row.base + 4) / 26))}
                  />
                ))}
              </MosaicRow>
            )
          )}
        </DateMosaic>
      </FilePane>
    </Main>

    <StatusBar>
      <StatusText>12 个项目</StatusText>
      <StatusSep />
      <ViewButtons>
        <ViewButton $on>
          <Svg width="10" height="16" viewBox="0 0 10 16">
            <rect x=".5" y=".5" width="9" height="15" fill="#fff" stroke="#9a9a9a" />
            <path d="M2 3h6M2 6h6M2 9h6" stroke="#777" />
            <rect x="3" y="11" width="3" height="3" fill="#c33" />
          </Svg>
        </ViewButton>
        <ViewButton $w={20}>
          <Svg width="20" height="16" viewBox="0 0 20 16">
            <rect x=".5" y=".5" width="19" height="15" fill="#eef4fa" stroke="#9a9a9a" />
            <rect x="2" y="2" width="16" height="6" fill="#4f9fde" />
          </Svg>
        </ViewButton>
      </ViewButtons>
    </StatusBar>

    {keyTips.map(([k, x, y]) => (
      <KeyTip key={k} $x={x} $y={y}>{k}</KeyTip>
    ))}
    <KeyTip $x={1298} $y={53}>E</KeyTip>
    <Watermark>CSDN @北极小仕猫</Watermark>
  </Window>
)

export default App
